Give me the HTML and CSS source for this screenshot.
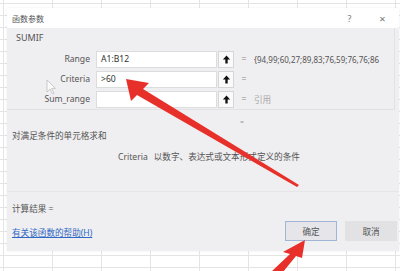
FILE: index.html
```html
<!DOCTYPE html>
<html lang="zh-CN">
<head>
  <meta charset="UTF-8" />
  <title>函数参数</title>
  <link rel="stylesheet" href="styles.css">
</head>
<body>
  <div class="dialog">

    <!-- barra de título -->
    <div class="titlebar">
      <span class="titlebar__text">函数参数</span>
      <span class="titlebar__btn">?</span>
      <span class="titlebar__btn close">×</span>
    </div>

    <!-- grupo SUMIF -->
    <div class="group">
      <div class="group__name">SUMIF</div>

      <div class="arg">
        <span class="arg__label">Range</span>
        <span class="arg__input">A1:B12</span>
        <span class="arg__pick"><svg viewBox="0 0 10 10" width="9" height="9"><path d="M5 0.5 L9 5 H6.3 V9.5 H3.7 V5 H1 Z" fill="#111"/></svg></span>
        <span class="arg__eq">=</span>
        <span class="arg__value">{94,99;60,27;89,83;76,59;76,76;86</span>
      </div>
      <div class="arg">
        <span class="arg__label">Criteria</span>
        <span class="arg__input">&gt;60</span>
        <span class="arg__pick"><svg viewBox="0 0 10 10" width="9" height="9"><path d="M5 0.5 L9 5 H6.3 V9.5 H3.7 V5 H1 Z" fill="#111"/></svg></span>
        <span class="arg__eq">=</span>
        <span class="arg__value"></span>
      </div>
      <div class="arg">
        <span class="arg__label">Sum_range</span>
        <span class="arg__input"></span>
        <span class="arg__pick"><svg viewBox="0 0 10 10" width="9" height="9"><path d="M5 0.5 L9 5 H6.3 V9.5 H3.7 V5 H1 Z" fill="#111"/></svg></span>
        <span class="arg__eq">=</span>
        <span class="arg__value muted">引用</span>
      </div>
    </div>

    <div class="result-eq">=</div>
    <div class="desc">对满足条件的单元格求和</div>
    <div class="desc-arg"><span class="desc-arg__name">Criteria</span>以数字、表达式或文本形式定义的条件</div>

    <!-- rodapé -->
    <div class="footer">
      <div class="calc">计算结果 =</div>
      <div class="footer__row">
        <a class="help" href="#">有关该函数的帮助(H)</a>
        <div class="buttons">
          <button class="btn focus">确定</button>
          <button class="btn">取消</button>
        </div>
      </div>
    </div>
  </div>

  <!-- setas vermelhas por cima -->
  <svg class="overlay" width="400" height="271" viewBox="0 0 400 271">
    <path d="M47 80 L47 92 L50 89 L52.5 94 L54 93.3 L51.6 88.4 L55.5 88.4 Z" fill="#fbfbfb" stroke="#b8b8b8" stroke-width="0.7"/>
    <polygon points="126,79 149,83 143,89 299,185 297,187 137,95 131,101" fill="#e8302b"/>
    <polygon points="305,240 302,258 296,256 283,272 271,272 290,254 283,252" fill="#e8302b"/>
  </svg>
</body>
</html>
```

FILE: styles.css
```css
/* BASE ----------------------------------------------------------------*/
*,::before,::after{box-sizing:border-box;margin:0;padding:0}
body{
  width:400px;height:271px;overflow:hidden;
  font-family:"Noto Sans","Noto Sans CJK SC",sans-serif;
  color:#444;
  background-color:#fff;
  background-image:
    linear-gradient(to right,#e4e4e4 1px,transparent 1px),
    linear-gradient(to bottom,#e4e4e4 1px,transparent 1px);
  background-size:49px 12px;
  background-position:3px 3px;
  position:relative;
}

/* DIÁLOGO -------------------------------------------------------------*/
.dialog{
  margin:8px 0 0 7px;
  width:392px;height:243px;
  background:#efeef0;
  display:flex;flex-direction:column;
  box-shadow:0 0 2px rgba(0,0,0,.08);
}
.titlebar{
  height:20px;background:#fff;
  display:flex;align-items:center;
  padding:0 0 0 5px;
  font-size:8px;color:#555;
}
.titlebar__text{flex:1}
.titlebar__btn{width:33px;text-align:center;font-size:9px;color:#777}
.titlebar__btn.close{font-size:11px}

/* GRUPO ---------------------------------------------------------------*/
.group{
  margin-right:4px;
  padding-top:5px;
  border-bottom:1px solid #e2e1e3;
  border-right:1px solid #e2e1e3;
  height:82px;
}
.group__name{font-size:9px;line-height:10px;padding-left:9px;color:#555;margin-bottom:6px}
.arg{display:flex;align-items:center;height:20px;font-size:8.6px}
.arg__label{width:83px;text-align:right;color:#555}
.arg__input{
  margin-left:6px;width:121px;height:17px;
  background:#fff;border:1px solid #dcdcdc;
  padding:0 4px;line-height:15px;color:#333;
}
.arg__pick{
  width:16px;height:17px;margin-left:1px;
  background:#fafafa;border:1px solid #d6d6d6;
  display:flex;align-items:center;justify-content:center;
}
.arg__eq{width:20px;text-align:center;color:#888}
.arg__value{flex:1;min-width:0;white-space:nowrap;overflow:hidden;font-size:8px;color:#555}
.arg__value.muted{color:#aaa;font-size:8.6px}

/* DESCRIÇÃO -----------------------------------------------------------*/
.result-eq{margin:6px 0 0 233px;font-size:7px;line-height:12px;color:#999}
.desc{padding-left:5px;font-size:8.6px;line-height:12px;margin-top:2px;color:#555}
.desc-arg{padding-left:111px;font-size:8.6px;line-height:12px;margin-top:9px;color:#555}
.desc-arg__name{margin-right:6px}

/* RODAPÉ --------------------------------------------------------------*/
.footer{margin-top:28px;border-top:1px solid #e6e5e7;padding:11px 2px 0 5px;flex:1}
.calc{font-size:8.6px;line-height:12px;color:#555}
.footer__row{display:flex;align-items:center;justify-content:space-between;margin-top:6px}
.help{font-size:8.6px;color:#2d68c4;text-decoration:underline;margin-top:3px}
.buttons{display:flex;gap:8px}
.btn{
  width:52px;height:20px;
  font-family:inherit;font-size:8.6px;color:#555;
  background:#e2e2e4;border:1px solid #e2e2e4;
}
.btn.focus{border-color:#9fb6d6;background:#e6e6ea}

/* SETAS ---------------------------------------------------------------*/
.overlay{position:absolute;left:0;top:0;pointer-events:none}
```
